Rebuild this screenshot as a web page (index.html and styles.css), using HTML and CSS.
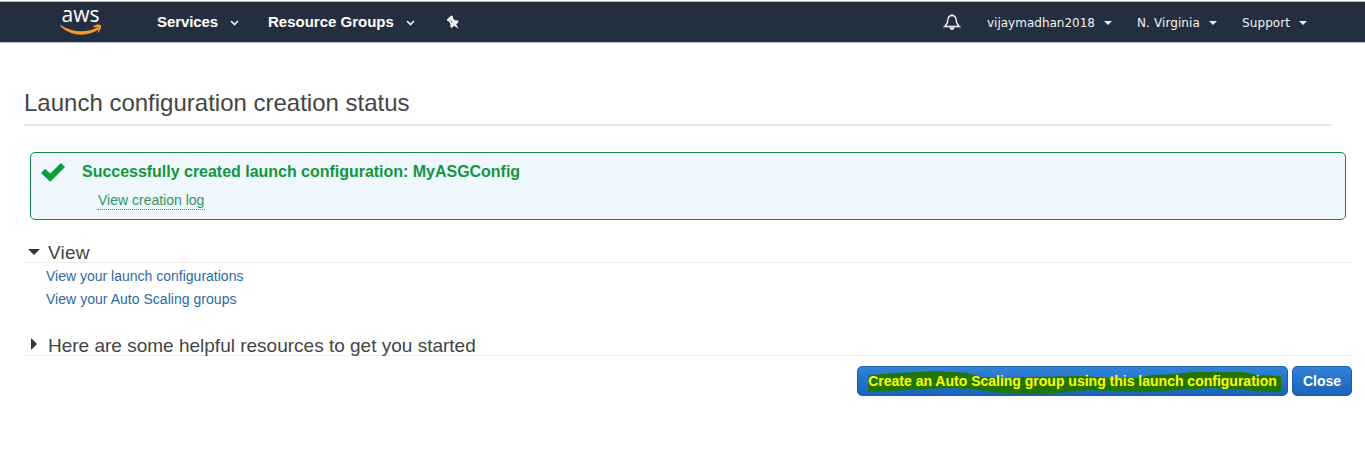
FILE: index.html
```html
<!DOCTYPE html>
<html lang="en">
<head>
<meta charset="utf-8">
<title>Launch configuration creation status</title>
<link rel="stylesheet" href="styles.css">
</head>
<body>
<header class="nav">
  <svg class="logo" width="44" height="34" viewBox="0 -6 44 34" aria-label="aws">
    <text class="logo-text" x="1.500" y="14" textLength="38" lengthAdjust="spacingAndGlyphs">aws</text>
    <path class="smile" d="M.3 17C12 24.500 27 25.500 37.500 19l1.700 2C27 29.500 11 28.500 0 18z"/>
    <path class="smile" d="M33.300 18.400C36 16.300 40 16 41 17.200c.700 1.700-.800 5.400-3 7.500-.6.300-.8 0-.5-.5 1-2.300 1.500-4.100 1-4.800-.8-.700-2.800-.5-4.900-.200-.4 0-.6-.4-.3-.8z"/>
  </svg>
  <a class="menu services">Services</a>
  <svg class="chev chev-a" width="9" height="6" viewBox="0 0 9 6"><path d="M1 1l3.500 3.500L8 1"/></svg>
  <a class="menu groups">Resource Groups</a>
  <svg class="chev chev-b" width="9" height="6" viewBox="0 0 9 6"><path d="M1 1l3.500 3.500L8 1"/></svg>
  <svg class="pin" width="14" height="15" viewBox="0 0 14 15"><path d="M.8 4.500L5.500.300 7.200 1.800 6.800 3.200 9.500 5.500 11.500 5.300 12.700 6.900 10.200 9.200 12.600 13.800 8.100 10.800 5.800 13 4.300 11.700 4.600 9.200 2.800 6.200 1.500 6.100z"/><path class="pin-shine" d="M4.300 4.800l2 2.900"/></svg>
  <svg class="bell" width="18" height="18" viewBox="0 0 18 18"><path class="bell-line" d="M1.700 13.500C4 11.600 4.600 10.500 4.800 7 5 4.300 6.600 2.500 9 2.500S13 4.300 13.200 7c.2 3.500.8 4.600 3.100 6.500zM9 2.500V.800"/><path d="M6.500 14.200h5c0 3.400-5 3.400-5 0z"/></svg>
  <a class="small user">vijaymadhan2018</a><i class="caret caret-user"></i>
  <a class="small region">N. Virginia</a><i class="caret caret-region"></i>
  <a class="small support">Support</a><i class="caret"></i>
</header>
<main class="page">
  <h1 class="title"><span>Launch configuration creation status</span></h1>
  <section class="alert">
    <svg class="check" width="24" height="20" viewBox="0 0 24 20"><path d="M0 11L4.200 6.800 9.200 11.600 19.900.900 24 4.900 9.300 19.800z"/></svg>
    <div class="alert-body">
      <div><strong class="alert-title">Successfully created launch configuration: MyASGConfig</strong></div>
      <a class="log">View creation log</a>
    </div>
  </section>
  <section class="group view">
    <h2 class="group-title"><i class="tri-down"></i><span class="t-view">View</span></h2>
    <ul class="links">
      <li><a class="link-config">View your launch configurations</a></li>
      <li><a class="link-groups">View your Auto Scaling groups</a></li>
    </ul>
  </section>
  <section class="group">
    <h2 class="group-title"><i class="tri-right"></i><span class="t-help">Here are some helpful resources to get you started</span></h2>
  </section>
  <div class="actions">
    <button class="btn create">
      <svg class="marker" width="416" height="24" viewBox="0 0 416 24"><path d="M2 5L30 3 70 1 100 3 115 7 135 9 160 7 220 6 240 8 270 8 285 5 310 4 325 2 375 2 390 5 414 6V22H404L380 20 345 18 310 20 285 22 250 21 220 20 190 23 160 24.500 135 23 105 19 80 18 40 20 1 22z"/></svg>
      <span class="create-label">Create an Auto Scaling group using this launch configuration</span>
    </button>
    <button class="btn close"><span>Close</span></button>
  </div>
</main>
</body>
</html>
```
FILE: styles.css
```css
* { box-sizing: border-box; }
body { margin: 0; background: #fff; color: #444; font-family: "Liberation Sans", Arial, sans-serif; }
.nav { display: flex; align-items: center; height: 42px; margin-top: 1px; padding: 1px 58px 1px 60px; background: #232f3e; border-top: 1px solid #b5bec8; border-bottom: 1px solid #b5c0cc; color: #fff; white-space: nowrap; }
.nav svg { flex: none; fill: #f2f2f2; }
.nav .logo { margin-top: -6px; overflow: visible; }
.logo-text { font: 500 22px "Open Sans", sans-serif; fill: #fff; }
.nav .smile { fill: #f39b2d; }
.menu { font-weight: bold; font-size: 15px; line-height: 20px; flex: none; }
.services { width: 61px; margin-left: 53px; letter-spacing: -0.1px; }
.groups { width: 126px; margin-left: 29px; }
.nav .chev { fill: none; stroke: #eee; stroke-width: 1.7; margin-top: 2px; }
.chev-a { margin-left: 12px; }
.chev-b { margin-left: 12px; }
.pin { margin-left: 31px; }
.pin-shine { stroke: #56606c; stroke-width: .8; }
.bell { margin-left: auto; }
.bell .bell-line { fill: none; stroke: #eee; stroke-width: 1.4; }
.small { font: 12px/18px "DejaVu Sans", Verdana, sans-serif; flex: none; color: #f2f2f2; margin-top: 2px; }
.user { width: 108px; margin-left: 26px; }
.region { width: 63px; letter-spacing: 0.1px; }
.support { width: 48px; letter-spacing: 0.1px; }
.caret { border: 4px solid transparent; border-top-color: #eee; border-bottom: 0; margin: 2px 0 0 9px; flex: none; }
.caret-user, .caret-region { margin-right: 25px; }
.page { padding: 43px 13px 0 24px; }
.title { margin: 0 20px 0 0; height: 40px; border-bottom: 2px solid #e7e7e7; font-weight: normal; font-size: 24px; line-height: 34px; }
.alert { display: flex; margin: 26px 6px 0; height: 68px; border: 1px solid #12874b; border-radius: 5px; background: #eff7ff; padding: 9px 10px; color: #12963c; }
.check { fill: #0f9d3a; margin-right: 17px; }
.alert-body { line-height: 19px; }
.alert-title { font-size: 16px; letter-spacing: -0.02px; }
.log { display: inline-block; margin: 10px 0 0 15px; padding: 0 1px; font-size: 14px; line-height: 18px; border-bottom: 1px dotted #45a06a; color: #37935d; }
.group-title { display: flex; margin: 0; height: 22px; padding-left: 4px; border-bottom: 1px solid #ececec; font-weight: normal; font-size: 19px; line-height: 24px; }
.view { margin-top: 21px; height: 93px; }
.tri-down { border: 6px solid transparent; border-top-color: #333; border-bottom: 0; margin: 8px 8px 0 0; height: 6px; }
.tri-right { border: 6px solid transparent; border-left-color: #333; border-right: 0; margin: 4px 11px 0 3px; height: 12px; }
.t-view { letter-spacing: 0.2px; }
.links { list-style: none; margin: 2px 0 0 22px; padding: 0; font-size: 14px; line-height: 23px; color: #2d6aa5; }
.link-groups { letter-spacing: 0.03px; }
.actions { display: flex; justify-content: flex-end; gap: 4px; margin-top: 10px; }
.btn { height: 30px; border: 1px solid #1a60a9; border-radius: 5px; background: linear-gradient(#3182d8, #1b63ba); color: #fff; font: bold 14px/28px "Liberation Sans", Arial, sans-serif; padding: 0; white-space: nowrap; }
.create { position: relative; width: 431px; color: #ff0; }
.marker { position: absolute; left: 9px; top: 3px; fill: #217503; }
.create-label { position: relative; }
.close { width: 60px; }
```
